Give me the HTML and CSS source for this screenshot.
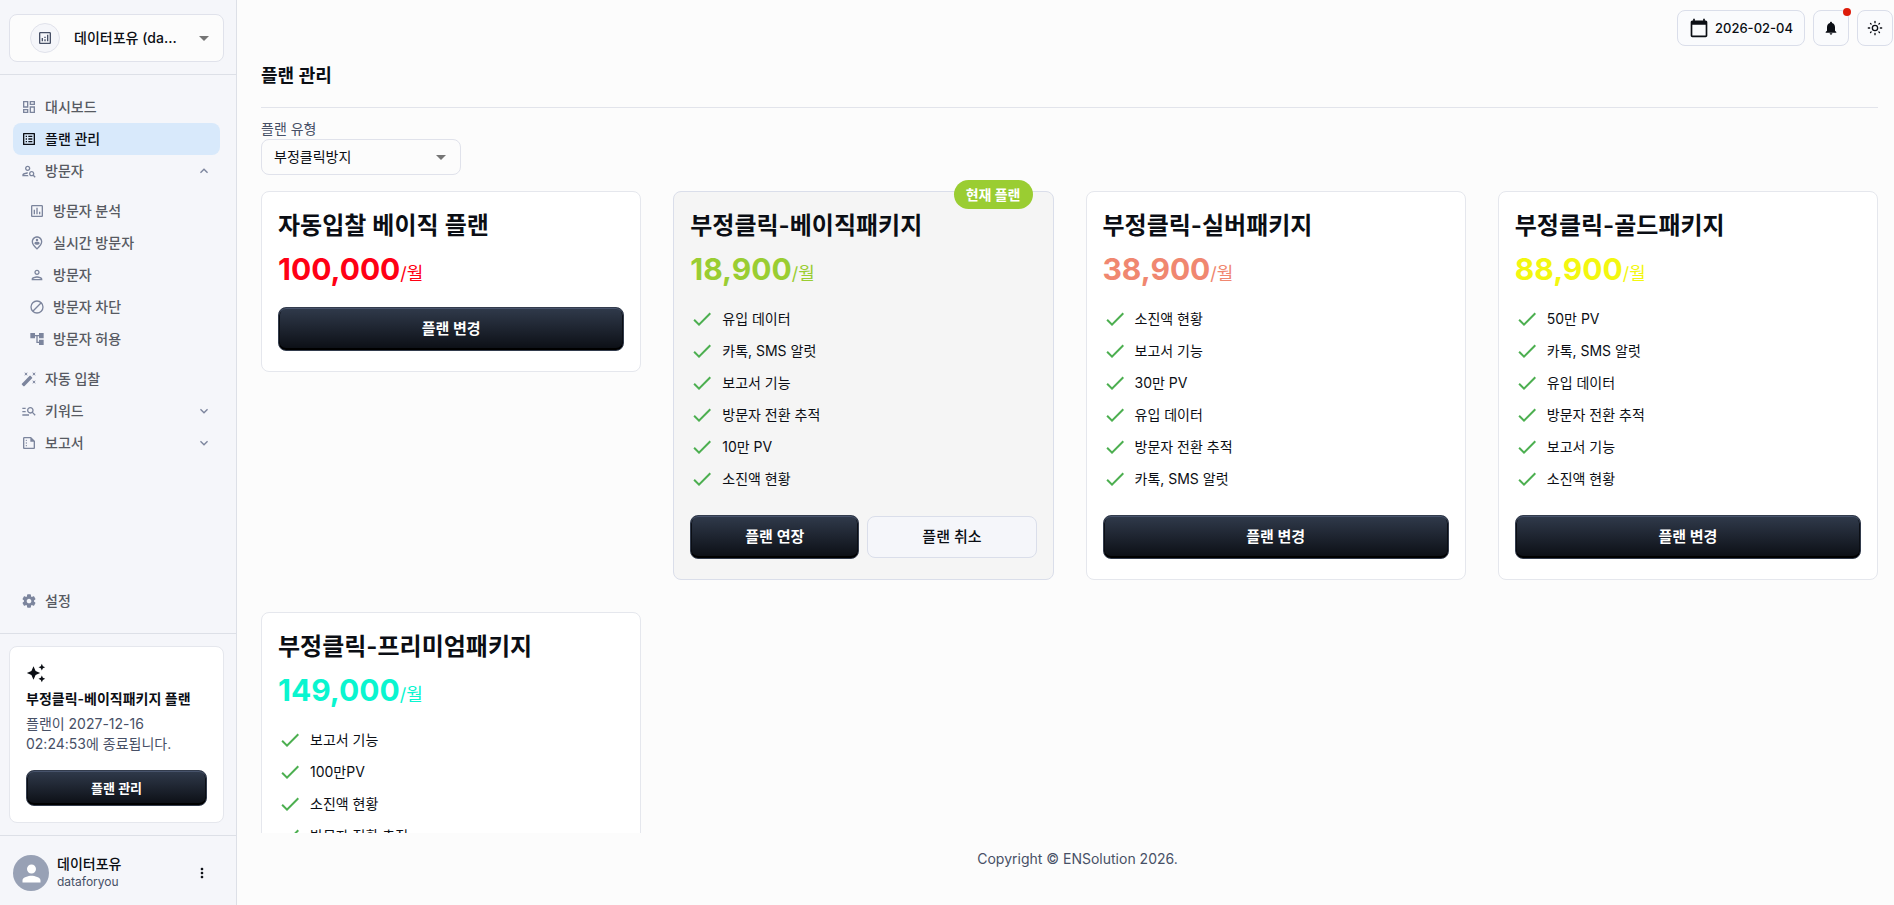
FILE: index.html
```html
<!DOCTYPE html>
<html lang="ko">
<head>
<meta charset="utf-8">
<meta name="viewport" content="width=device-width, initial-scale=1">
<title>플랜 관리</title>
<link rel="stylesheet" href="styles.css">
</head>
<body>
<svg class="sprite" aria-hidden="true">
  <symbol id="i-dashboard" viewBox="0 0 24 24"><path d="M19 5v2h-4V5h4M9 5v6H5V5h4m10 8v6h-4v-6h4M9 17v2H5v-2h4M21 3h-8v6h8V3zM11 3H3v10h8V3zm10 8h-8v10h8V11zm-10 4H3v6h8v-6z"/></symbol>
  <symbol id="i-list" viewBox="0 0 24 24"><path d="M19 5v14H5V5h14m1.1-2H3.9c-.5 0-.9.4-.9.9v16.2c0 .4.4.9.9.9h16.2c.4 0 .9-.5.9-.9V3.9c0-.5-.5-.9-.9-.9zM11 7h6v2h-6zm0 4h6v2h-6zm0 4h6v2h-6zM7 7h2v2H7zm0 4h2v2H7zm0 4h2v2H7z"/></symbol>
  <symbol id="i-search-person" viewBox="0 0 24 24"><path d="M10 12c2.21 0 4-1.79 4-4s-1.79-4-4-4-4 1.79-4 4 1.79 4 4 4zm0-6c1.1 0 2 .9 2 2s-.9 2-2 2-2-.9-2-2 .9-2 2-2zM4 18c.22-.72 3.31-2 6-2 0-.7.13-1.37.35-1.99C7.62 13.91 2 15.27 2 18v2h9.54c-.52-.58-.93-1.25-1.19-2H4zm15.43.02c.36-.59.57-1.28.57-2.02 0-2.21-1.79-4-4-4s-4 1.79-4 4 1.79 4 4 4c.74 0 1.43-.22 2.02-.57L20.59 22 22 20.59l-2.57-2.57zM16 18c-1.1 0-2-.9-2-2s.9-2 2-2 2 .9 2 2-.9 2-2 2z"/></symbol>
  <symbol id="i-chart" viewBox="0 0 24 24"><path d="M9 17H7v-7h2v7zm4 0h-2V7h2v10zm4 0h-2v-4h2v4zm2 2H5V5h14v14zm0-16H5c-1.1 0-2 .9-2 2v14c0 1.1.9 2 2 2h14c1.1 0 2-.9 2-2V5c0-1.1-.9-2-2-2z"/></symbol>
  <symbol id="i-analytics" viewBox="0 0 24 24"><path d="M19 3H5c-1.1 0-2 .9-2 2v14c0 1.1.9 2 2 2h14c1.1 0 2-.9 2-2V5c0-1.1-.9-2-2-2zm0 16H5V5h14v14zM7 12h2v5H7zm8-5h2v10h-2zm-4 7h2v3h-2zm0-4h2v2h-2z"/></symbol>
  <symbol id="i-pin" viewBox="0 0 24 24"><path d="M12 2C7.8 2 4 5.220 4 10.200c0 3.320 2.670 7.250 8 11.800 5.330-4.550 8-8.480 8-11.800C20 5.220 16.200 2 12 2zm0 17.330c-4.050-3.700-6-6.790-6-9.140C6 6.570 8.650 4 12 4s6 2.570 6 6.200c0 2.340-1.950 5.440-6 9.130z"/><circle cx="12" cy="7.600" r="1.900"/><path d="M8 12.700c0-1.800 2.300-2.400 4-2.400s4 .6 4 2.400c-.9 1.200-2.300 2-4 2s-3.100-.8-4-2z"/></symbol>
  <symbol id="i-person-outline" viewBox="0 0 24 24"><path d="M12 6c1.100 0 2 .9 2 2s-.9 2-2 2-2-.9-2-2 .9-2 2-2m0 10c2.700 0 5.800 1.290 6 2H6c.23-.72 3.310-2 6-2m0-12C9.790 4 8 5.790 8 8s1.790 4 4 4 4-1.790 4-4-1.790-4-4-4zm0 10c-2.670 0-8 1.340-8 4v2h16v-2c0-2.660-5.330-4-8-4z"/></symbol>
  <symbol id="i-block" viewBox="0 0 24 24"><path d="M12 3a9 9 0 1 0 0 18 9 9 0 0 0 0-18zM5.700 18.300 18.300 5.700" fill="none" stroke="currentColor" stroke-width="2"/></symbol>
  <symbol id="i-tree" viewBox="0 0 24 24"><path d="M22 11V3h-7v3H9V3H2v8h7V8h2v10h4v3h7v-8h-7v3h-2V8h2v3z"/></symbol>
  <symbol id="i-wand" viewBox="0 0 24 24"><path d="M7.500 5.600L10 7 8.600 4.500 10 2 7.500 3.400 5 2l1.400 2.500L5 7zm12 9.800L17 14l1.400 2.500L17 19l2.500-1.400L22 19l-1.400-2.500L22 14zM22 2l-2.500 1.400L17 2l1.400 2.500L17 7l2.500-1.400L22 7l-1.400-2.500zm-7.630 5.290c-.39-.39-1.020-.39-1.410 0L1.290 18.960c-.39.39-.39 1.020 0 1.410l2.340 2.340c.39.39 1.020.39 1.410 0L16.700 11.050c.39-.39.39-1.020 0-1.410l-2.330-2.350z"/></symbol>
  <symbol id="i-keyword" viewBox="0 0 24 24"><path d="M7 9H2V7h5v2zm0 3H2v2h5v-2zm13.590 7l-3.830-3.830c-.8.520-1.740.83-2.760.83-2.760 0-5-2.240-5-5s2.240-5 5-5 5 2.240 5 5c0 1.020-.31 1.960-.83 2.750L22 17.590 20.590 19zM17 11c0-1.650-1.350-3-3-3s-3 1.350-3 3 1.350 3 3 3 3-1.350 3-3zM2 19h10v-2H2v2z"/></symbol>
  <symbol id="i-report" viewBox="0 0 24 24"><path d="M15 3H5c-1.100 0-2 .9-2 2v14c0 1.100.9 2 2 2h14c1.100 0 2-.9 2-2V9l-6-6zM5 19V5h9v5h5v9H5z"/><circle cx="8" cy="8" r="1"/><circle cx="8" cy="12" r="1"/><circle cx="8" cy="16" r="1"/></symbol>
  <symbol id="i-gear" viewBox="0 0 24 24"><path d="M19.500 12c0-.23-.01-.45-.03-.68l1.860-1.410c.4-.3.51-.86.26-1.300l-1.870-3.230c-.25-.44-.79-.62-1.250-.42l-2.150.91c-.37-.26-.76-.49-1.170-.68l-.29-2.310c-.06-.5-.49-.88-.99-.88h-3.730c-.51 0-.94.38-1 .88l-.29 2.310c-.41.19-.8.42-1.170.68l-2.150-.91c-.46-.2-1-.02-1.250.42L2.410 8.620c-.25.44-.14.990.26 1.300l1.860 1.410c-.02.22-.03.44-.03.67s.01.45.03.68l-1.860 1.410c-.4.3-.51.86-.26 1.300l1.870 3.230c.25.44.79.62 1.250.42l2.150-.91c.37.26.76.49 1.170.68l.29 2.310c.06.5.49.88.99.88h3.730c.5 0 .93-.38.990-.88l.29-2.310c.41-.19.8-.42 1.170-.68l2.150.91c.46.2 1 .02 1.250-.42l1.870-3.230c.25-.44.14-.99-.26-1.300l-1.860-1.410c.03-.23.04-.45.04-.68zm-7.460 3.500c-1.930 0-3.500-1.570-3.500-3.500s1.570-3.500 3.500-3.500 3.500 1.570 3.500 3.500-1.570 3.500-3.500 3.500z"/></symbol>
  <symbol id="i-sparkle" viewBox="0 0 24 24"><path d="M19 9l1.250-2.750L23 5l-2.750-1.250L19 1l-1.250 2.750L15 5l2.750 1.250L19 9zm-7.500.5L9 4 6.500 9.500 1 12l5.500 2.500L9 20l2.500-5.500L17 12l-5.500-2.500zM19 15l-1.250 2.750L15 19l2.750 1.250L19 23l1.250-2.750L23 19l-2.750-1.250L19 15z"/></symbol>
  <symbol id="i-calendar" viewBox="0 0 24 24"><path d="M20 3h-1V1h-2v2H7V1H5v2H4c-1.100 0-2 .9-2 2v16c0 1.100.9 2 2 2h16c1.100 0 2-.9 2-2V5c0-1.100-.9-2-2-2zm0 18H4V8h16v13z"/></symbol>
  <symbol id="i-bell" viewBox="0 0 24 24"><path d="M12 22c1.100 0 2-.9 2-2h-4c0 1.100.89 2 2 2zm6-6v-5c0-3.070-1.640-5.640-4.500-6.320V4c0-.83-.67-1.500-1.500-1.500s-1.500.67-1.500 1.500v.68C7.630 5.360 6 7.920 6 11v5l-2 2v1h16v-1l-2-2z"/></symbol>
  <symbol id="i-sun" viewBox="0 0 24 24"><g fill="none" stroke="currentColor" stroke-width="2" stroke-linecap="round"><circle cx="12" cy="12" r="4"/><path d="M12 2v2M12 20v2M2 12h2M20 12h2M5.300 5.300l.9.9M17.800 17.800l.9.9M18.700 5.300l-.9.9M6.200 17.800l-.9.9"/></g></symbol>
  <symbol id="i-check" viewBox="0 0 24 24"><path d="M9 16.170L4.830 12l-1.420 1.410L9 19 21 7l-1.410-1.410z"/></symbol>
  <symbol id="i-person" viewBox="0 0 24 24"><path d="M12 12c2.210 0 4-1.790 4-4s-1.790-4-4-4-4 1.790-4 4 1.790 4 4 4zm0 2c-2.670 0-8 1.340-8 4v2h16v-2c0-2.660-5.330-4-8-4z"/></symbol>
  <symbol id="i-more" viewBox="0 0 24 24"><path d="M12 8c1.100 0 2-.9 2-2s-.9-2-2-2-2 .9-2 2 .9 2 2 2zm0 2c-1.100 0-2 .9-2 2s.9 2 2 2 2-.9 2-2-.9-2-2-2zm0 6c-1.100 0-2 .9-2 2s.9 2 2 2 2-.9 2-2-.9-2-2-2z"/></symbol>
  <symbol id="i-caret" viewBox="0 0 24 24"><path d="M7 10l5 5 5-5z"/></symbol>
  <symbol id="i-down" viewBox="0 0 24 24"><path d="M16.590 8.590L12 13.170 7.410 8.590 6 10l6 6 6-6z"/></symbol>
  <symbol id="i-up" viewBox="0 0 24 24"><path d="M12 8l-6 6 1.410 1.410L12 10.830l4.590 4.580L18 14z"/></symbol>
</svg>

<div class="app">
  <aside class="sidebar">
    <div class="sidebar-top">
      <div class="select account-select">
        <span class="account-icon"><svg class="icon"><use href="#i-analytics"/></svg></span>
        <select aria-label="계정 선택"><option>데이터포유 (dataforyou)</option></select>
        <svg class="icon caret"><use href="#i-caret"/></svg>
      </div>
    </div>

    <nav class="nav" aria-label="주 메뉴">
      <a class="nav-item" href="#"><svg class="icon"><use href="#i-dashboard"/></svg><span>대시보드</span></a>
      <a class="nav-item active" href="#" aria-current="page"><svg class="icon"><use href="#i-list"/></svg><span>플랜 관리</span></a>
      <button class="nav-item" type="button" aria-expanded="true"><svg class="icon"><use href="#i-search-person"/></svg><span>방문자</span><svg class="icon chevron"><use href="#i-up"/></svg></button>
      <div class="nav-group">
        <a class="nav-item" href="#"><svg class="icon"><use href="#i-chart"/></svg><span>방문자 분석</span></a>
        <a class="nav-item" href="#"><svg class="icon"><use href="#i-pin"/></svg><span>실시간 방문자</span></a>
        <a class="nav-item" href="#"><svg class="icon"><use href="#i-person-outline"/></svg><span>방문자</span></a>
        <a class="nav-item" href="#"><svg class="icon"><use href="#i-block"/></svg><span>방문자 차단</span></a>
        <a class="nav-item" href="#"><svg class="icon"><use href="#i-tree"/></svg><span>방문자 허용</span></a>
      </div>
      <a class="nav-item" href="#"><svg class="icon"><use href="#i-wand"/></svg><span>자동 입찰</span></a>
      <button class="nav-item" type="button" aria-expanded="false"><svg class="icon"><use href="#i-keyword"/></svg><span>키워드</span><svg class="icon chevron"><use href="#i-down"/></svg></button>
      <button class="nav-item" type="button" aria-expanded="false"><svg class="icon"><use href="#i-report"/></svg><span>보고서</span><svg class="icon chevron"><use href="#i-down"/></svg></button>
      <a class="nav-item nav-last" href="#"><svg class="icon"><use href="#i-gear"/></svg><span>설정</span></a>
    </nav>

    <div class="sidebar-plan">
      <section class="plan-note">
        <svg class="icon"><use href="#i-sparkle"/></svg>
        <h2>부정클릭-베이직패키지 플랜</h2>
        <p>플랜이 2027-12-16 02:24:53에 종료됩니다.</p>
        <button class="btn btn-dark btn-small" type="button">플랜 관리</button>
      </section>
    </div>

    <div class="user">
      <span class="avatar"><svg class="icon"><use href="#i-person"/></svg></span>
      <div class="user-text"><strong>데이터포유</strong><span>dataforyou</span></div>
      <button class="more" type="button" aria-label="더보기"><svg class="icon"><use href="#i-more"/></svg></button>
    </div>
  </aside>

  <main class="main">
    <header class="toolbar">
      <button class="tool date" type="button"><svg class="icon"><use href="#i-calendar"/></svg><span>2026-02-04</span></button>
      <button class="tool" type="button" aria-label="알림"><svg class="icon"><use href="#i-bell"/></svg><span class="dot"></span></button>
      <button class="tool" type="button" aria-label="테마"><svg class="icon"><use href="#i-sun"/></svg></button>
    </header>

    <div class="content">
      <h1>플랜 관리</h1>
      <div class="filter">
        <label for="plan-type">플랜 유형</label>
        <div class="select type-select">
          <select id="plan-type"><option>부정클릭방지</option></select>
          <svg class="icon caret"><use href="#i-caret"/></svg>
        </div>
      </div>

      <div class="plans">
        <article class="plan">
          <h2>자동입찰 베이직 플랜</h2>
          <p class="price red"><strong>100,000</strong>/월</p>
          <div class="actions"><button class="btn btn-dark" type="button">플랜 변경</button></div>
        </article>

        <article class="plan current">
          <span class="badge">현재 플랜</span>
          <h2>부정클릭-베이직패키지</h2>
          <p class="price green"><strong>18,900</strong>/월</p>
          <ul>
            <li><svg class="icon"><use href="#i-check"/></svg>유입 데이터</li>
            <li><svg class="icon"><use href="#i-check"/></svg>카톡, SMS 알럿</li>
            <li><svg class="icon"><use href="#i-check"/></svg>보고서 기능</li>
            <li><svg class="icon"><use href="#i-check"/></svg>방문자 전환 추적</li>
            <li><svg class="icon"><use href="#i-check"/></svg>10만 PV</li>
            <li><svg class="icon"><use href="#i-check"/></svg>소진액 현황</li>
          </ul>
          <div class="actions"><button class="btn btn-dark" type="button">플랜 연장</button><button class="btn btn-light" type="button">플랜 취소</button></div>
        </article>

        <article class="plan">
          <h2>부정클릭-실버패키지</h2>
          <p class="price salmon"><strong>38,900</strong>/월</p>
          <ul>
            <li><svg class="icon"><use href="#i-check"/></svg>소진액 현황</li>
            <li><svg class="icon"><use href="#i-check"/></svg>보고서 기능</li>
            <li><svg class="icon"><use href="#i-check"/></svg>30만 PV</li>
            <li><svg class="icon"><use href="#i-check"/></svg>유입 데이터</li>
            <li><svg class="icon"><use href="#i-check"/></svg>방문자 전환 추적</li>
            <li><svg class="icon"><use href="#i-check"/></svg>카톡, SMS 알럿</li>
          </ul>
          <div class="actions"><button class="btn btn-dark" type="button">플랜 변경</button></div>
        </article>

        <article class="plan">
          <h2>부정클릭-골드패키지</h2>
          <p class="price yellow"><strong>88,900</strong>/월</p>
          <ul>
            <li><svg class="icon"><use href="#i-check"/></svg>50만 PV</li>
            <li><svg class="icon"><use href="#i-check"/></svg>카톡, SMS 알럿</li>
            <li><svg class="icon"><use href="#i-check"/></svg>유입 데이터</li>
            <li><svg class="icon"><use href="#i-check"/></svg>방문자 전환 추적</li>
            <li><svg class="icon"><use href="#i-check"/></svg>보고서 기능</li>
            <li><svg class="icon"><use href="#i-check"/></svg>소진액 현황</li>
          </ul>
          <div class="actions"><button class="btn btn-dark" type="button">플랜 변경</button></div>
        </article>

        <article class="plan">
          <h2>부정클릭-프리미엄패키지</h2>
          <p class="price teal"><strong>149,000</strong>/월</p>
          <ul>
            <li><svg class="icon"><use href="#i-check"/></svg>보고서 기능</li>
            <li><svg class="icon"><use href="#i-check"/></svg>100만PV</li>
            <li><svg class="icon"><use href="#i-check"/></svg>소진액 현황</li>
            <li><svg class="icon"><use href="#i-check"/></svg>방문자 전환 추적</li>
          </ul>
        </article>
      </div>
    </div>

    <footer class="footer">Copyright © ENSolution 2026.</footer>
  </main>
</div>
</body>
</html>
```
FILE: styles.css
```css
* { box-sizing: border-box; }

body {
  margin: 0;
  background: #fcfcfc;
  color: #0b0e14;
  font-family: Inter, "Noto Sans CJK KR", sans-serif;
  font-size: 14px;
  line-height: 20px;
}

h1, h2, p, ul { margin: 0; padding: 0; }
button, select { font: inherit; color: inherit; }
button { cursor: pointer; }
a { color: inherit; text-decoration: none; }

.sprite { display: none; }
.icon { display: block; flex: none; width: 16px; height: 16px; fill: currentColor; }

.app { display: flex; height: 100vh; overflow: hidden; }

/* Sidebar */
.sidebar {
  display: flex;
  flex-direction: column;
  flex: none;
  width: 237px;
  background: #f5f6fa;
  border-right: 1px solid #dde0e7;
}

.sidebar-top { padding: 14px 12px 12px 9px; border-bottom: 1px solid #dde0e7; }

.select {
  display: grid;
  align-items: center;
  border: 1px solid #e0e2eb;
  border-radius: 8px;
  background: #fcfcfc;
}
.select select {
  grid-area: 1 / 1;
  width: 100%;
  height: 100%;
  padding: 0 44px 0 12px;
  border: 0;
  border-radius: 8px;
  background: transparent;
  appearance: none;
  text-overflow: ellipsis;
  white-space: nowrap;
  overflow: hidden;
}
.caret {
  grid-area: 1 / 1;
  justify-self: end;
  width: 24px;
  height: 24px;
  margin-right: 7px;
  color: #757575;
  pointer-events: none;
}

.account-select { height: 48px; }
.account-select select { padding-left: 64px; font-weight: 500; }
.account-icon {
  grid-area: 1 / 1;
  display: grid;
  place-items: center;
  width: 30px;
  height: 30px;
  margin-left: 20px;
  border: 1px solid #e0e2eb;
  border-radius: 50%;
  background: #f5f6fa;
  color: #475066;
}

.nav { display: flex; flex-direction: column; flex: 1; padding: 16px 16px 16px 13px; }
.nav-item {
  display: flex;
  align-items: center;
  gap: 8px;
  height: 32px;
  padding: 0 8px;
  border: 0;
  border-radius: 8px;
  background: none;
  color: #575a62;
  font-weight: 500;
  text-align: left;
}
.nav-item .icon { color: #7c859d; }
.nav-item.active { background: #d8e9fb; color: #0b0e14; }
.nav-item.active .icon { color: #0b0e14; }
.nav-item .chevron { margin-left: auto; }
.nav-group { display: flex; flex-direction: column; padding: 8px 0 8px 8px; }
.nav-last { margin-top: auto; }

.sidebar-plan {
  padding: 12px 12px 12px 9px;
  border-top: 1px solid #dde0e7;
  border-bottom: 1px solid #dde0e7;
}
.plan-note {
  padding: 16px;
  border: 1px solid #e5e7ed;
  border-radius: 8px;
  background: #fff;
}
.plan-note .icon { width: 20px; height: 20px; }
.plan-note h2 { margin: 5px 0 4px; font-size: 14px; line-height: 22px; font-weight: 600; white-space: nowrap; }
.plan-note p { margin-bottom: 16px; color: #475066; }

.user { display: flex; align-items: center; gap: 8px; padding: 19px 16px 14px 13px; }
.avatar {
  display: grid;
  place-items: center;
  width: 36px;
  height: 36px;
  border-radius: 50%;
  background: #98a1b5;
  color: #fff;
}
.avatar .icon { width: 27px; height: 27px; }
.user-text { flex: 1; display: flex; flex-direction: column; }
.user-text strong { font-weight: 500; line-height: 18px; }
.user-text span { font-size: 12px; line-height: 18px; color: #475066; }
.more { display: grid; place-items: center; width: 36px; height: 36px; padding: 0; border: 0; background: none; }

/* Buttons */
.btn {
  flex: 1;
  height: 44px;
  border-radius: 8px;
  font-size: 15px;
  font-weight: 600;
}
.btn-dark {
  border: 1px solid #333c4d;
  background: linear-gradient(#303a4b, #0b0e14);
  box-shadow: inset 0 1px 0 #47536b, inset 0 -2px 0 #000, inset 1px 0 0 #0b0e14, inset -1px 0 0 #0b0e14;
  color: #fff;
}
.btn-light { height: 42px; border: 1px solid #dadeea; background: #f5f6fa; font-weight: 500; }
.btn-small { width: 100%; height: 36px; font-size: 13px; }

/* Main column */
.main { display: flex; flex-direction: column; flex: 1; min-width: 0; }
.toolbar { display: flex; justify-content: flex-end; gap: 8px; padding: 10px 1px 0 24px; }
.tool {
  position: relative;
  display: flex;
  align-items: center;
  justify-content: center;
  width: 36px;
  height: 36px;
  padding: 0;
  border: 1px solid #dadeea;
  border-radius: 8px;
  background: #fafbfd;
}
.date { gap: 6px; width: 128px; font-size: 13px; font-weight: 500; }
.date .icon { width: 20px; height: 20px; }
.dot { position: absolute; top: -3px; right: -3px; width: 8px; height: 8px; border-radius: 50%; background: #dd1c0a; }

.content {
  display: flex;
  flex-direction: column;
  flex: 1;
  min-height: 0;
  padding: 14px 16px 0 24px;
  overflow: hidden;
}
h1 {
  padding-bottom: 15px;
  border-bottom: 1px solid #e2e4eb;
  font-size: 18px;
  line-height: 32px;
  font-weight: 600;
}
.filter { flex: none; padding: 11px 0 16px; }
.filter label { display: block; color: #475066; }
.type-select { width: 200px; height: 36px; }

.plans {
  display: grid;
  grid-template-columns: repeat(4, minmax(0, 1fr));
  align-items: start;
  gap: 32px;
}
.plan {
  position: relative;
  padding: 16px 16px 20px;
  border: 1px solid #e5e7ed;
  border-radius: 8px;
  background: #fff;
}
.plan.current { background: #f5f5f5; border-color: #dadeea; }
.plan h2 { font-size: 24px; line-height: 36px; font-weight: 600; }
.badge {
  position: absolute;
  top: -12px;
  right: 20px;
  padding: 4px 12px;
  border-radius: 16px;
  background: #9acd32;
  color: #fff;
  font-weight: 700;
  line-height: 21px;
}
.price { margin-bottom: 8px; font-size: 18px; line-height: 20px; }
.price strong { font-size: 30px; line-height: 51px; font-weight: 700; }
.red { color: #ff0014; }
.green { color: #9acd32; }
.salmon { color: #f08770; }
.yellow { color: #f3f70f; }
.teal { color: #0af5cf; }

.plan ul { list-style: none; margin-bottom: 16px; }
.plan li { display: flex; align-items: center; gap: 8px; height: 32px; }
.plan li .icon { width: 24px; height: 24px; color: #4caf50; }
.actions { display: flex; align-items: center; gap: 8px; padding-top: 4px; }

.footer { padding: 16px 0 36px 24px; text-align: center; color: #475066; }
```
